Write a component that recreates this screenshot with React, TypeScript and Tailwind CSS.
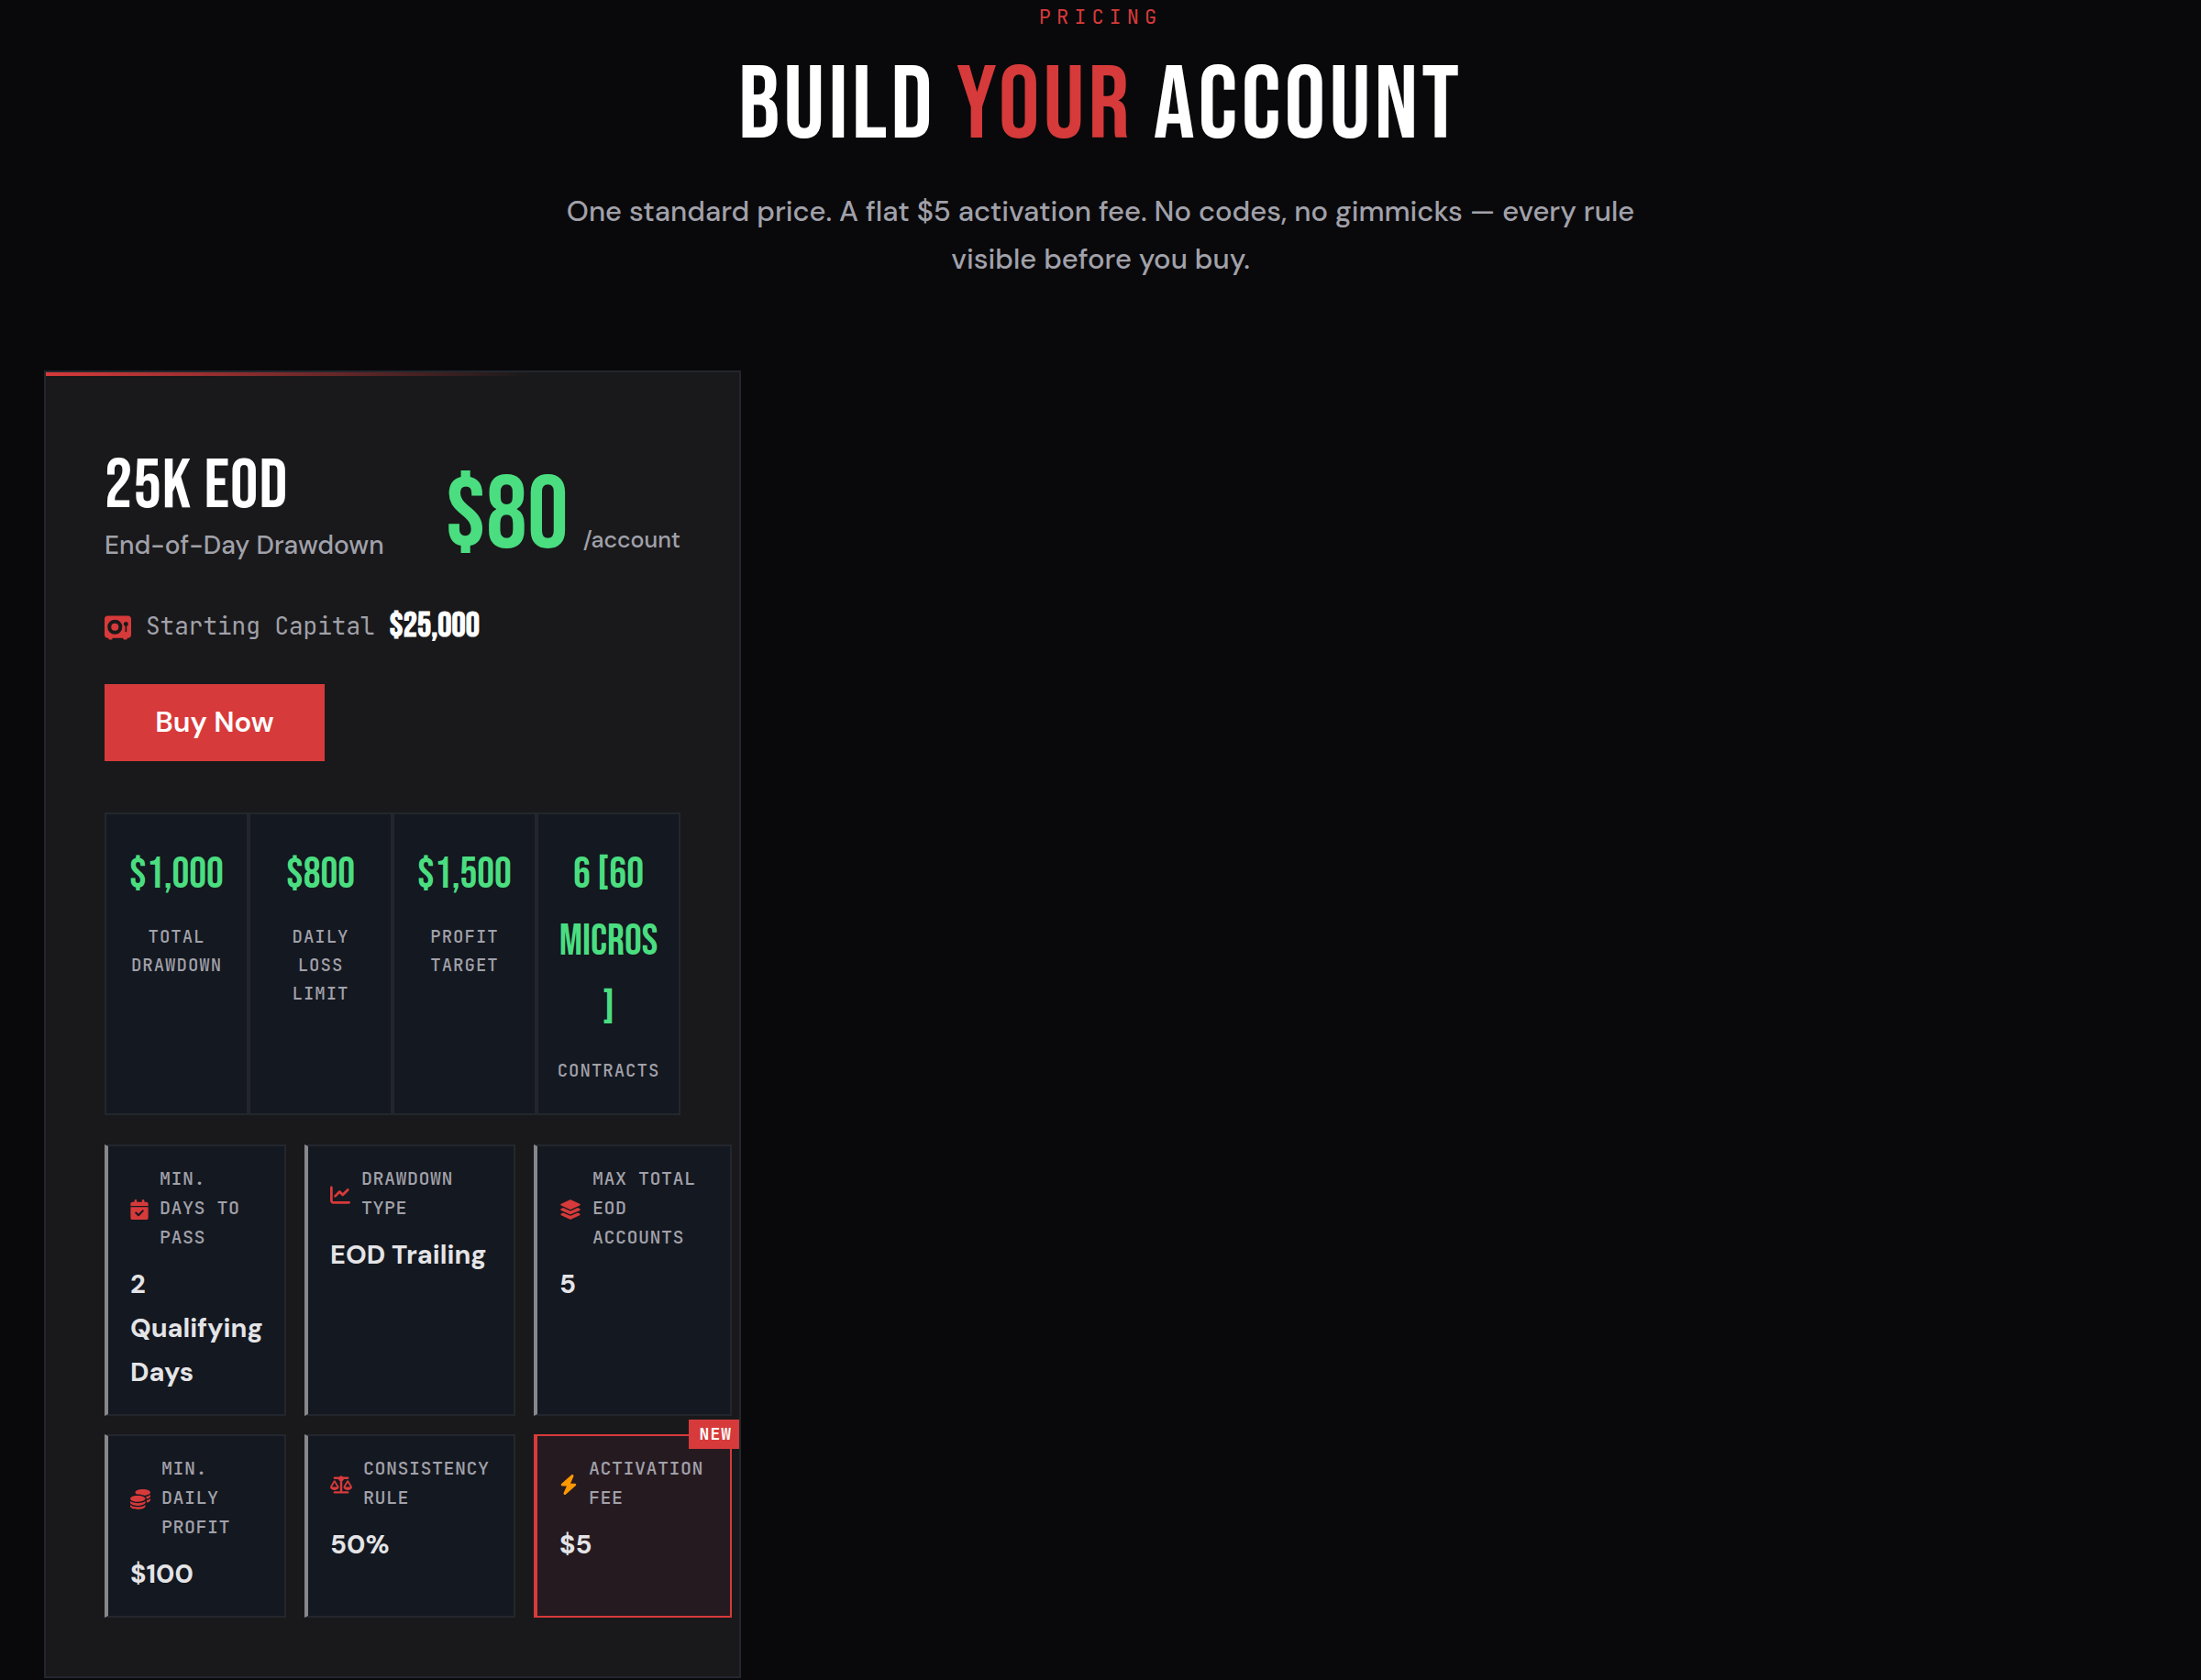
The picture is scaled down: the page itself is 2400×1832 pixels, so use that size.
import {IconType} from "react-icons";
import {
  FaBolt,
  FaCalendarCheck,
  FaChartLine,
  FaCoins,
  FaLayerGroup,
  FaScaleBalanced,
  FaVault,
} from "react-icons/fa6";

interface IStat {
  value: string;
  label: string;
}

interface ISpec {
  icon: IconType;
  iconWidth: string;
  label: string;
  value: string;
  badge?: string;
}

const stats: IStat[] = [
  {value: "$1,000", label: "Total Drawdown"},
  {value: "$800", label: "Daily Loss Limit"},
  {value: "$1,500", label: "Profit Target"},
  {value: "6 [60 Micros ]", label: "Contracts"},
];

const specs: ISpec[] = [
  {icon: FaCalendarCheck, iconWidth: "w-5", label: "Min. Days to Pass", value: "2 Qualifying Days"},
  {icon: FaChartLine, iconWidth: "w-[22px]", label: "Drawdown Type", value: "EOD Trailing"},
  {icon: FaLayerGroup, iconWidth: "w-6", label: "Max Total EOD Accounts", value: "5"},
  {icon: FaCoins, iconWidth: "w-[22px]", label: "Min. Daily Profit", value: "$100"},
  {icon: FaScaleBalanced, iconWidth: "w-6", label: "Consistency Rule", value: "50%"},
  {icon: FaBolt, iconWidth: "w-5", label: "Activation Fee", value: "$5", badge: "New"},
];

function Stat({stat}: { stat: IStat }) {
  return (
      <div className="flex flex-col gap-[15px] border-2 border-[#23262d] bg-[#141820] px-4 pt-[30px] pb-[31px] text-center">
        <dt className="order-last font-['JetBrains_Mono','DejaVu_Sans_Mono',monospace] text-[19px] leading-[31px] font-medium tracking-[1px] text-[#a1a1aa] uppercase">
          {stat.label}
        </dt>
        <dd className="font-['Bebas_Neue','Liberation_Sans_Narrow',sans-serif] text-[47px] leading-[73px] text-[#4ade80] uppercase">
          {stat.value}
        </dd>
      </div>
  );
}

function Spec({spec}: { spec: ISpec }) {
  const Icon = spec.icon;
  const box = spec.badge
      ? "border-[#d73a3a] bg-[#261a21]"
      : "border-[#23262d] border-l-[#88888c] bg-[#141820]";

  return (
      <div className={"relative flex min-w-0 flex-col gap-[11px] border-2 border-l-4 px-6 pt-[19px] pb-[22px] " + box}>
        {spec.badge && (
            <span
                className={"absolute -top-[18px] -right-[14px] bg-[#d73a3a] px-3 text-[18px] leading-8 font-bold "
                    + "tracking-[1px] text-white uppercase font-['JetBrains_Mono','DejaVu_Sans_Mono',monospace]"}>
              {spec.badge}
            </span>
        )}
        <dt className="flex items-center gap-3 font-['JetBrains_Mono','DejaVu_Sans_Mono',monospace] text-[20px] leading-8 font-medium tracking-wide text-[#a1a1aa] uppercase">
          <Icon
              className={"mt-1 h-[22px] shrink-0 " + spec.iconWidth
                  + (spec.badge ? " text-[#ff9800]" : " text-[#d73a3a]")}/>
          {spec.label}
        </dt>
        <dd className="text-[29px] leading-[48px] font-bold text-zinc-200">
          {spec.value}
        </dd>
      </div>
  );
}

function PlanCard() {
  return (
      <article className="relative overflow-hidden border-2 border-[#23262d] bg-[#19191b] px-16 pt-[84px] pb-16">
        <div className="absolute inset-x-0 top-0 h-1 bg-[linear-gradient(90deg,#d73a3a,transparent_70%)]"/>
        <div className="flex items-end justify-between">
          <div>
            <h3 className="font-['Bebas_Neue','Liberation_Sans_Narrow',sans-serif] text-[76px] leading-[82px] tracking-[1px] text-white">25K EOD</h3>
            <p className="text-[28px] leading-[46px] font-medium text-[#a1a1aa]">End-of-Day Drawdown</p>
          </div>
          <div className="flex items-baseline gap-4">
            <span className="font-['Bebas_Neue','Liberation_Sans_Narrow',sans-serif] text-[112px] leading-[108px] text-[#4ade80]">$80</span>
            <span className="text-[25px] font-medium text-[#a1a1aa]">/account</span>
          </div>
        </div>
        <p className="mt-[38px] flex h-[52px] items-center gap-4">
          <FaVault className="mt-1 size-[29px] text-[#d73a3a]"/>
          <span className="font-['JetBrains_Mono','DejaVu_Sans_Mono',monospace] text-[26px] text-[#a1a1aa]">Starting Capital</span>
          <span className="font-['Bebas_Neue','Liberation_Sans_Narrow',sans-serif] text-[38px] font-bold text-white">$25,000</span>
        </p>
        <button type="button" className="mt-[38px] h-[84px] w-60 cursor-pointer bg-[#d73a3a] text-[31px] font-semibold text-white">
          Buy Now
        </button>
        <dl className="mt-14 grid grid-cols-4">
          {stats.map(s => <Stat key={s.label} stat={s}/>)}
        </dl>
        <dl className="mt-8 -mr-14 grid grid-cols-[198fr_230fr_216fr] gap-5">
          {specs.map(s => <Spec key={s.label} spec={s}/>)}
        </dl>
      </article>
  );
}

export default function App() {
  return (
      <main className="min-h-screen bg-[#09090b] font-['DM_Sans','Open_Sans',sans-serif]">
        <section className="px-12 pt-px">
          <header className="mx-auto max-w-[1200px] text-center">
            <p className="font-['JetBrains_Mono','DejaVu_Sans_Mono',monospace] text-[22px] leading-9 tracking-[6px] text-[#d73a3a] uppercase">Pricing</p>
            <h2 className="mt-6 font-['Bebas_Neue','Liberation_Sans_Narrow',sans-serif] text-[112px] leading-[112px] tracking-[4px] text-white uppercase">
              Build <span className="text-[#d73a3a]">Your</span> Account
            </h2>
            <p className="mt-8 text-[31px] leading-[52px] font-medium text-[#a1a1aa]">
              One standard price. A flat $5 activation fee. No codes, no gimmicks — every rule visible before you buy.
            </p>
          </header>
          <div className="mt-[95px] grid grid-cols-3 gap-3">
            <PlanCard/>
          </div>
        </section>
      </main>
  );
}
